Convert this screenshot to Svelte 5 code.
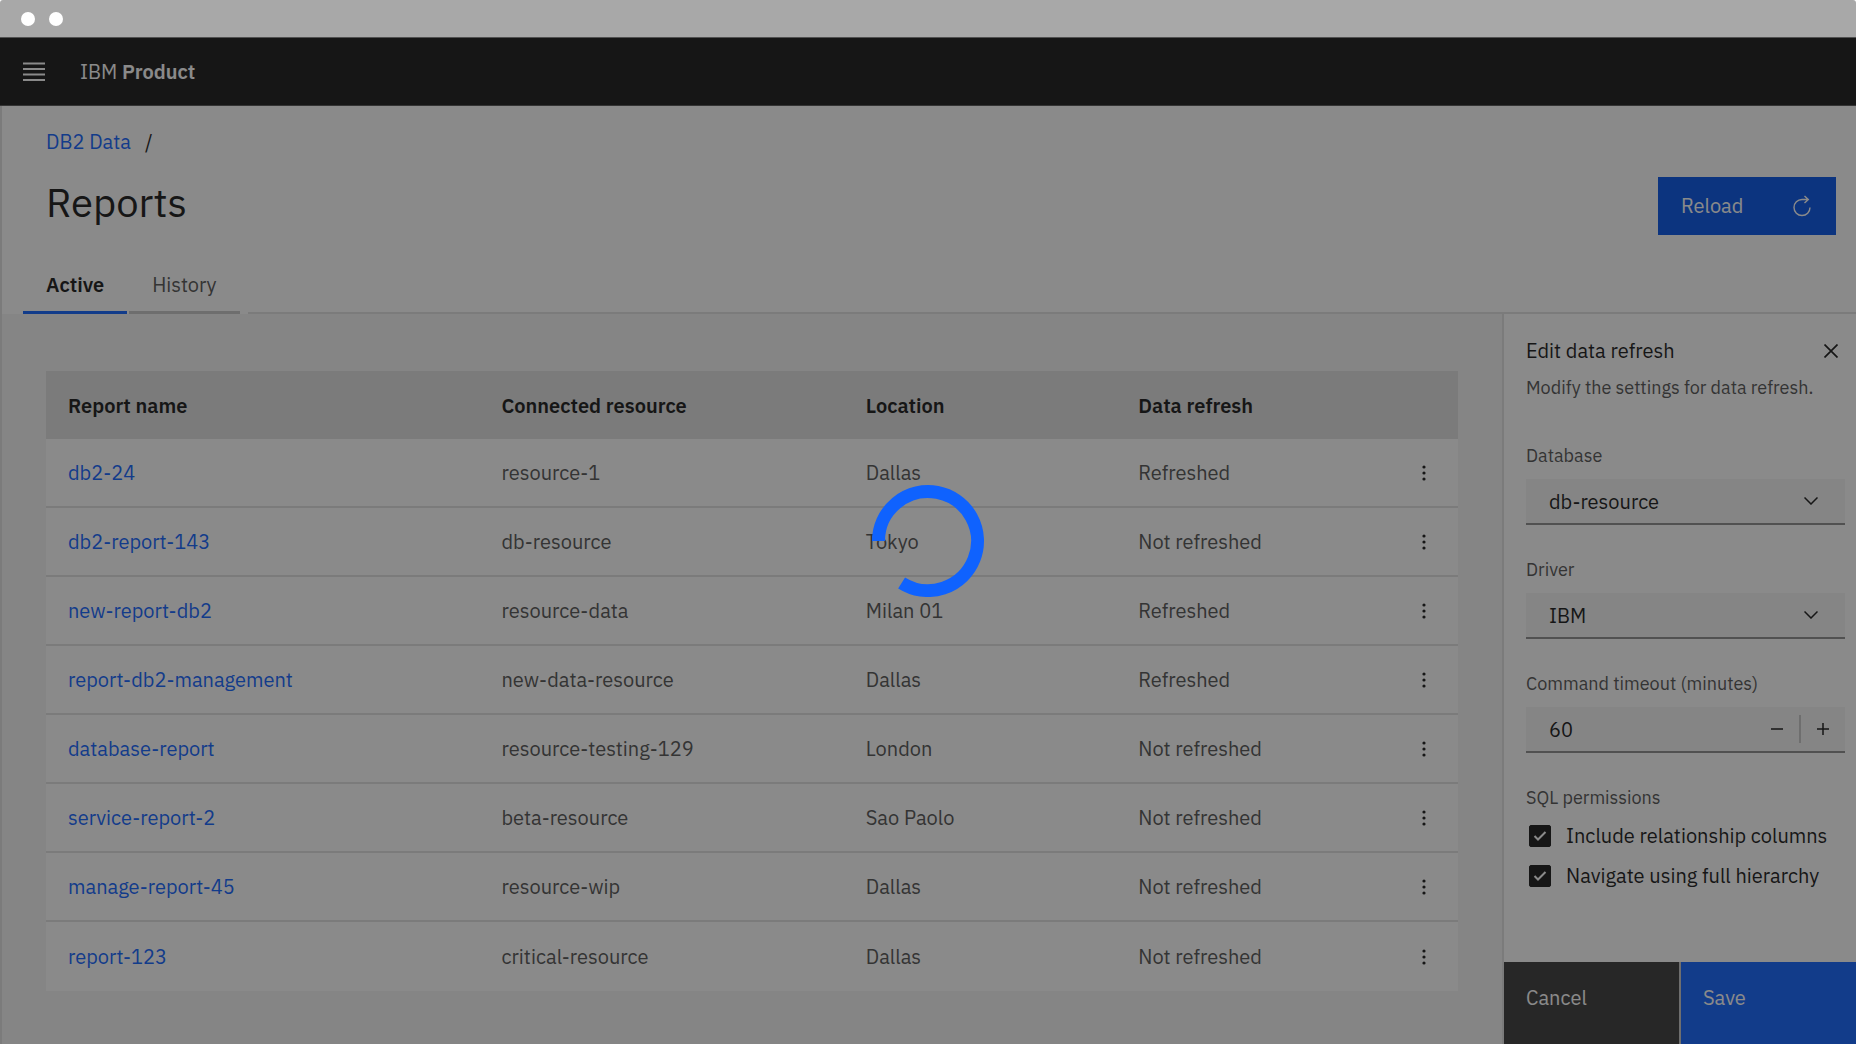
<script>
  const reports = [
    ['db2-24', 'resource-1', 'Dallas', 'Refreshed'],
    ['db2-report-143', 'db-resource', 'Tokyo', 'Not refreshed'],
    ['new-report-db2', 'resource-data', 'Milan 01', 'Refreshed'],
    ['report-db2-management', 'new-data-resource', 'Dallas', 'Refreshed'],
    ['database-report', 'resource-testing-129', 'London', 'Not refreshed'],
    ['service-report-2', 'beta-resource', 'Sao Paolo', 'Not refreshed'],
    ['manage-report-45', 'resource-wip', 'Dallas', 'Not refreshed'],
    ['report-123', 'critical-resource', 'Dallas', 'Not refreshed']
  ];
  const selects = [
    { id: 'database', label: 'Database', value: 'db-resource' },
    { id: 'driver', label: 'Driver', value: 'IBM' }
  ];
  const permissions = ['Include relationship columns', 'Navigate using full hierarchy'];
  let timeout = $state(60);
</script>

<div class="window">
  <div class="titlebar"><span class="dot"></span><span class="dot"></span></div>

  <div class="app">
    <header class="topbar">
      <button class="icon-button" aria-label="Menu">
        <svg width="22" height="20" viewBox="0 0 22 20"><path d="M0 1.500h22M0 7h22M0 12.500h22M0 18h22" stroke="#fff" stroke-width="1.800" /></svg>
      </button>
      <a class="brand" href="#home">IBM <b>Product</b></a>
    </header>

    <div class="page">
      <div class="page-head">
        <div class="heading">
          <nav class="crumbs" aria-label="Breadcrumb"><a href="#data">DB2 Data</a><span>/</span></nav>
          <h1>Reports</h1>
        </div>
        <button class="reload">
          <span>Reload</span>
          <svg width="20" height="22" viewBox="0 0 20 22" fill="none" stroke="#fff" stroke-width="1.4"><path d="M18 12.500a8 8 0 1 1-8-8h6.500M12.500 1l3.800 3.500-3.800 3.500" /></svg>
        </button>
      </div>

      <div class="tabs" role="tablist">
        <button class="tab active" role="tab" aria-selected="true">Active</button>
        <button class="tab" role="tab" aria-selected="false">History</button>
        <span class="rule"></span>
      </div>

      <div class="body">
        <main>
          <table>
            <thead>
              <tr>
                <th class="c-name">Report name</th>
                <th class="c-resource">Connected resource</th>
                <th class="c-location">Location</th>
                <th>Data refresh</th>
                <th class="c-menu" aria-label="Actions"></th>
              </tr>
            </thead>
            <tbody>
              {#each reports as [name, resource, location, refresh]}
                <tr>
                  <td><a href={'#' + name}>{name}</a></td>
                  <td>{resource}</td>
                  <td>{location}</td>
                  <td>{refresh}</td>
                  <td class="c-menu">
                    <button class="icon-button" aria-label={'Actions for ' + name}>
                      <svg width="4" height="16" viewBox="0 0 4 16" fill="#161616"><circle cx="2" cy="2" r="1.6" /><circle cx="2" cy="8" r="1.6" /><circle cx="2" cy="14" r="1.6" /></svg>
                    </button>
                  </td>
                </tr>
              {/each}
            </tbody>
          </table>
        </main>

        <aside>
          <form onsubmit={(e) => e.preventDefault()}>
            <div class="panel-title">
              <h2>Edit data refresh</h2>
              <button type="button" class="icon-button" aria-label="Close">
                <svg width="14" height="14" viewBox="0 0 14 14"><path d="M.5.5l13 13M13.500.5l-13 13" stroke="#161616" stroke-width="1.7" /></svg>
              </button>
            </div>
            <p class="hint">Modify the settings for data refresh.</p>

            {#each selects as s}
              <div class="field">
                <label for={s.id}>{s.label}</label>
                <div class="control">
                  <select id={s.id}><option>{s.value}</option></select>
                  <svg class="chevron" width="14" height="8" viewBox="0 0 14 8"><path d="M.5.5L7 7 13.500.5" fill="none" stroke="#161616" stroke-width="1.5" /></svg>
                </div>
              </div>
            {/each}

            <div class="field">
              <label for="timeout">Command timeout (minutes)</label>
              <div class="control stepper">
                <input id="timeout" type="number" bind:value={timeout} />
                <button type="button" class="icon-button" aria-label="Decrease" onclick={() => timeout--}>
                  <svg width="12" height="12" viewBox="0 0 12 12"><path d="M0 6h12" stroke="#161616" stroke-width="1.5" /></svg>
                </button>
                <span class="divider"></span>
                <button type="button" class="icon-button" aria-label="Increase" onclick={() => timeout++}>
                  <svg width="12" height="12" viewBox="0 0 12 12"><path d="M0 6h12M6 0v12" stroke="#161616" stroke-width="1.5" /></svg>
                </button>
              </div>
            </div>

            <fieldset>
              <legend>SQL permissions</legend>
              {#each permissions as p}
                <label class="check">
                  <span class="box">
                    <input type="checkbox" checked />
                    <svg width="14" height="10" viewBox="0 0 14 10"><path d="M1.500 5l3.500 3.500L12.500 1" fill="none" stroke="#fff" stroke-width="2" /></svg>
                  </span>
                  {p}
                </label>
              {/each}
            </fieldset>
          </form>
          <div class="actions">
            <button class="cancel">Cancel</button>
            <button class="save">Save</button>
          </div>
        </aside>
      </div>
    </div>

    <div class="overlay" role="status" aria-label="Loading">
      <svg width="112" height="112" viewBox="-56 -56 112 112"><path d="M-49.500 0A49.500 49.500 0 1 1-26.400 41.900" fill="none" stroke="#0f62fe" stroke-width="13" /></svg>
    </div>
  </div>
</div>

<style>
  :global(body) { background: #fff; }
  .window, .window * { box-sizing: border-box; }
  .window {
    min-height: 100vh;
    display: flex;
    flex-direction: column;
    font: 20px/24px "IBM Plex Sans", "Noto Sans", sans-serif;
    color: #161616;
  }
  svg { display: block; flex: none; }
  button, input, select { font: inherit; color: inherit; border: 0; margin: 0; padding: 0; background: none; border-radius: 0; text-align: left; }
  a { color: #0f62fe; text-decoration: none; }
  h1, h2, p { margin: 0; font-weight: 400; }
  .icon-button { display: grid; place-items: center; }

  .titlebar { display: flex; align-items: center; gap: 14px; height: 37px; padding-left: 21px; background: #a8a8a8; border-radius: 3px 3px 0 0; }
  .dot { width: 14px; height: 14px; border-radius: 50%; background: #fff; }

  .app { position: relative; flex: 1; display: flex; flex-direction: column; }
  .topbar { display: flex; align-items: center; gap: 35px; height: 69px; padding-left: 23px; background: #161616; border-top: 1px solid #8d8d8d; border-bottom: 1px solid #525252; }
  .brand { color: #fff; }
  .brand b { font-weight: 600; }

  .page { flex: 1; display: flex; flex-direction: column; background: #fff; border-left: 2px solid #e0e0e0; }
  .page-head { display: flex; justify-content: space-between; align-items: flex-end; padding: 24px 20px 0 44px; }
  .crumbs { display: flex; gap: 14px; }
  h1 { font-size: 40px; line-height: 48px; margin: 24px 0 9px; }
  .reload { display: flex; justify-content: space-between; align-items: center; width: 178px; height: 58px; padding: 0 24px 0 23px; background: #0353e9; color: #fff; }

  .tabs { display: flex; gap: 2px; margin-left: 21px; padding-top: 20px; }
  .tab { height: 59px; padding: 4px 23px 0; border-bottom: 3px solid #c6c6c6; color: #525252; }
  .tab.active { font-weight: 600; color: #161616; border-color: #0f62fe; }
  .rule { flex: 1; margin-left: 6px; border-bottom: 2px solid #e0e0e0; }

  .body { flex: 1; display: flex; }
  main { flex: 1; padding: 57px 44px 53px; background: #f4f4f4; }
  table { width: 100%; border-collapse: separate; border-spacing: 0; table-layout: fixed; background: #fff; }
  th, td { height: 69px; padding: 0 0 0 22px; text-align: left; }
  th { height: 68px; padding-top: 2px; background: #e0e0e0; font-weight: 600; }
  td { color: #525252; border-bottom: 2px solid #e0e0e0; }
  tr:last-child td { border-bottom: 0; }
  .c-name { width: 30.7%; }
  .c-resource { width: 25.8%; }
  .c-location { width: 19.3%; }
  .c-menu { width: 58px; }

  aside { display: flex; flex-direction: column; width: 354px; border-left: 2px solid #e0e0e0; }
  form { flex: 1; padding: 25px 11px 0 22px; }
  .panel-title { display: flex; justify-content: space-between; padding-right: 7px; }
  h2 { font-size: 20px; line-height: 24px; }
  .hint, .field label, legend { font-size: 18px; line-height: 22px; color: #525252; }
  .hint { margin: 14px 0 46px; white-space: nowrap; }
  .field { margin-bottom: 34px; }
  .field label { display: block; margin-bottom: 12px; }
  .field:last-of-type { margin-bottom: 0; }
  .control { display: grid; align-items: center; height: 46px; background: #f4f4f4; border-bottom: 2px solid #8d8d8d; }
  select { grid-area: 1 / 1; width: 100%; height: 44px; padding: 2px 0 0 23px; appearance: none; }
  .chevron { grid-area: 1 / 1; justify-self: end; margin-right: 27px; pointer-events: none; }
  .stepper { display: flex; }
  .stepper input { flex: 1; min-width: 0; padding: 2px 0 0 23px; appearance: textfield; }
  .stepper input::-webkit-inner-spin-button { display: none; }
  .stepper .icon-button { width: 44px; height: 44px; }
  .divider { width: 2px; height: 28px; background: #c6c6c6; }
  fieldset { margin: 34px 0 0; padding: 0; border: 0; }
  legend { padding: 0; margin-bottom: 15px; }
  .check { display: flex; align-items: center; gap: 15px; height: 24px; margin-bottom: 16px; padding-left: 3px; white-space: nowrap; }
  .box { display: grid; place-items: center; }
  .box input { grid-area: 1 / 1; width: 22px; height: 22px; appearance: none; background: #fff; border: 1px solid #161616; border-radius: 2px; }
  .box input:checked { background: #161616; }
  .box svg { grid-area: 1 / 1; pointer-events: none; }
  .actions { display: grid; grid-template-columns: 1fr 1fr; gap: 2px; height: 82px; background: #c6c6c6; }
  .actions button { display: flex; padding: 24px 22px; color: #fff; }
  .cancel { background: #393939; }
  .save { background: #0f62fe; }

  .overlay { position: absolute; inset: 0; display: grid; place-items: center; background: rgba(22, 22, 22, 0.5); }
</style>
